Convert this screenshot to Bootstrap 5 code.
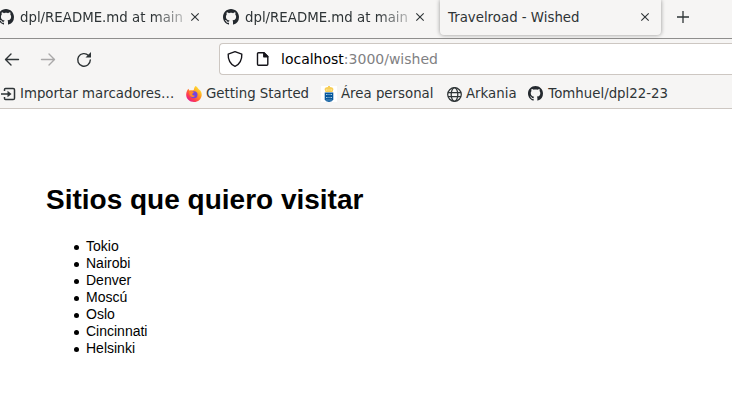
<!DOCTYPE html>
<html lang="es">
<head>
<meta charset="utf-8">
<title>Travelroad - Wished</title>
<link rel="stylesheet" href="https://cdn.jsdelivr.net/npm/bootstrap@5.3.0/dist/css/bootstrap.min.css">
<style>
body { width: 732px; height: 404px; background: #fff; color: #000; }
.chrome { height: 109px; background: #f6f5f4; color: #2e3436; border-bottom: 1px solid #cdc7c2; font: 13.33px/16px "DejaVu Sans", sans-serif; }
.chrome svg { display: block; flex: none; }
.tab-strip { height: 39px; border-bottom: 1px solid #8f8e8d; }
.tab-item { height: 34px; flex: none; }
.tab-a { width: 214px; }
.tab-a svg:first-child { margin-left: -2px; }
.tab-b { width: 226px; padding-left: 9px; }
.tab-current { width: 221px; height: 35px; padding: 0 11px 0 8px; border-radius: 0 0 4px 4px; box-shadow: 0 0 4px rgba(0,0,0,.4); }
.tab-current svg { margin-bottom: 1px; }
.tab-text { width: 163px; margin: 0 7px 0 6px; padding-top: 1px; flex: none; -webkit-mask-image: linear-gradient(90deg,#000 132px,transparent 176px); mask-image: linear-gradient(90deg,#000 132px,transparent 176px); }
.new-tab { margin-left: 16px; }
.tool-row { height: 40px; }
.address { width: 530px; height: 32px; margin-left: 127px; background: #fff; border: 1px solid #cdc7c2; border-right: 0; border-radius: 4px 0 0 4px; font-size: 14px; color: #7f8183; }
.host { color: #000; }
.mark-item { height: 29px; flex: none; }
.mark-import { width: 186px; }
.mark-firefox { width: 135px; }
.mark-area { width: 125px; }
.mark-globe { width: 82px; }
.mark-globe span { margin-left: 3px; }
.page { padding: 74px 46px 0; font: 14px/17px "Liberation Sans", sans-serif; }
.page h1 { font-size: 28px; line-height: 34px; font-weight: 700; margin: 0 0 21px; }
.page ul { padding-left: 26px; margin: 0; list-style: none; }
.page li::before { content: ""; display: inline-block; width: 5px; height: 5px; margin: 0 7px 1px 2px; border-radius: 50%; background: #000; }
</style>
<script src="https://cdn.jsdelivr.net/npm/bootstrap@5.3.0/dist/js/bootstrap.bundle.min.js"></script>
</head>
<body class="overflow-hidden">
<svg width="0" height="0" class="position-absolute">
<symbol id="gh" viewBox="0 0 16 16"><path fill="#24292e" fill-rule="evenodd" d="M8 0C3.58 0 0 3.58 0 8c0 3.54 2.29 6.53 5.47 7.59.4.07.55-.17.55-.38 0-.19-.01-.82-.01-1.49-2.01.37-2.53-.49-2.69-.94-.09-.23-.48-.94-.82-1.13-.28-.15-.68-.52-.01-.53.63-.01 1.08.58 1.23.82.72 1.21 1.87.87 2.33.66.07-.52.28-.87.51-1.07-1.78-.2-3.64-.89-3.64-3.95 0-.87.31-1.59.82-2.15-.08-.2-.36-1.02.08-2.12 0 0 .67-.21 2.2.82.64-.18 1.32-.27 2-.27s1.36.09 2 .27c1.53-1.04 2.2-.82 2.2-.82.44 1.1.16 1.92.08 2.12.51.56.82 1.27.82 2.15 0 3.07-1.87 3.75-3.65 3.95.29.25.54.73.54 1.48 0 1.07-.01 1.93-.01 2.2 0 .21.15.46.55.38A8.01 8.01 0 0 0 16 8c0-4.42-3.58-8-8-8z"/></symbol>
<symbol id="close" viewBox="0 0 10 10"><path d="M1.300 1.300l7.400 7.400M8.700 1.300L1.300 8.700" stroke="#2e3436" stroke-width="1.1" fill="none"/></symbol>
</svg>
<header class="chrome">
  <div class="tab-strip d-flex align-items-start">
    <div class="tab-item tab-a d-flex align-items-center"><svg width="16" height="16"><use href="#gh"/></svg><span class="tab-text text-nowrap overflow-hidden">dpl/README.md at main</span><svg width="10" height="10"><use href="#close"/></svg></div>
    <div class="tab-item tab-b d-flex align-items-center"><svg width="16" height="16"><use href="#gh"/></svg><span class="tab-text text-nowrap overflow-hidden">dpl/README.md at main</span><svg width="10" height="10"><use href="#close"/></svg></div>
    <div class="tab-current d-flex align-items-center justify-content-between"><span>Travelroad - Wished</span><svg width="10" height="10"><use href="#close"/></svg></div>
    <div class="tab-item d-flex align-items-center"><svg width="12" height="12" class="new-tab"><path d="M6 0v12M0 6h12" stroke="#2e3436" stroke-width="1.3"/></svg></div>
  </div>
  <div class="tool-row d-flex align-items-center">
    <svg width="92" height="18" fill="none" stroke="#2e3436" stroke-width="1.4" stroke-linecap="round" stroke-linejoin="round"><path d="M18.500 9.500H6M11 4L5.500 9.500 11 15"/><path stroke="#aaa9a9" d="M41.500 9.500H54M49 4l5.500 5.500L49 15"/><path d="M88.500 5.500A6.300 6.300 0 1 0 90.300 10"/><path fill="#2e3436" stroke="none" d="M91 2v5.500h-5.500z"/></svg>
    <div class="address d-flex align-items-center">
      <svg width="61" height="18" fill="none" stroke="#15141a" stroke-width="1.4" stroke-linejoin="round"><path d="M15 1.700L21.800 4.100C22.200 9.500 19.500 14.800 15 16.400 10.500 14.800 7.800 9.500 8.200 4.100z"/><path d="M38.500 2.700H44L47.800 6.500V14.300Q47.800 15.300 46.800 15.300H38.500Q37.500 15.300 37.500 14.300V3.700Q37.500 2.700 38.500 2.700z"/><path fill="#15141a" d="M43.800 2.700V6.700H47.800z"/></svg>
      <span class="text-nowrap"><span class="host">localhost</span>:3000/wished</span>
    </div>
  </div>
  <div class="d-flex">
    <div class="mark-item mark-import d-flex align-items-center"><svg width="16" height="16" fill="none" stroke="#2e3436" stroke-width="1.5"><path d="M4.500 5V3.500Q4.500 2.500 5.500 2.500H13.200Q14.500 2.500 14.500 3.800V12.200Q14.500 13.500 13.200 13.500H5.500Q4.500 13.500 4.500 12.500V11M1 8H8"/><path stroke="none" fill="#2e3436" d="M7.500 4.800L11.500 8 7.500 11.200z"/></svg><span class="ms-1 text-nowrap">Importar marcadores…</span></div>
    <div class="mark-item mark-firefox d-flex align-items-center"><svg width="16" height="16" viewBox="0 0 16 16"><defs><linearGradient id="flame" x1=".9" y1=".1" x2=".2" y2=".95"><stop stop-color="#ffee36"/><stop offset=".4" stop-color="#ff9a22"/><stop offset=".75" stop-color="#ff404b"/><stop offset="1" stop-color="#e51b91"/></linearGradient></defs><path fill="url(#flame)" d="M9.500 0C11.500 1 12 2.500 13 3.500 15 4.500 16 7 15.700 9.500 15.200 13.300 12 16 8 16 3.500 16 0 12.700.2 8.500.3 6 1.200 4 2.500 2.700L3.200 4.500 5 4.200C7 4 7.500 4.500 8 3.500 8 2.300 8.500 1 9.500 0z"/><circle cx="8" cy="8.700" r="3.500" fill="#7543df"/><path fill="#ff8928" d="M3 5.500Q6 4.500 8 6.500L6 8Q6.500 10 9 9.800 7.500 12 5 10.500 3 9 3 5.500z"/></svg><span class="ms-1 text-nowrap">Getting Started</span></div>
    <div class="mark-item mark-area d-flex align-items-center"><svg width="16" height="16"><path fill="#fff" d="M0 0h16v16H0z"/><path fill="#f8cf56" d="M7 0h2v1q3 0 3.500 2L11.500 6h-7L3.500 3Q4 1 7 1z"/><path stroke="#fff3cc" stroke-width=".8" d="M5 4h1.500m1 0h1m1 0H11"/><path fill="#07589d" d="M3.700 6.500h8.600V13.500Q11.500 15.700 8 16 4.500 15.700 3.700 13.500z"/><path stroke="#a9cce0" stroke-width="1" d="M5 8.500h1.500m1 0h1m1 0H11M5 11.500h1.500m1 0h1m1 0H11M5.500 14h1m1 0h1m1 0h1"/></svg><span class="ms-1 text-nowrap">Área personal</span></div>
    <div class="mark-item mark-globe d-flex align-items-center"><svg width="17" height="16" fill="none" stroke="#2e3436" stroke-width="1.25"><circle cx="8.500" cy="8.500" r="6.800"/><ellipse cx="8.500" cy="8.500" rx="3.300" ry="6.800"/><path d="M2 6.500h13M2 10.500h13"/></svg><span class="text-nowrap">Arkania</span></div>
    <div class="mark-item d-flex align-items-center gap-1"><svg width="15" height="15"><use href="#gh"/></svg><span class="text-nowrap">&#8202;Tomhuel/dpl22-23</span></div>
  </div>
</header>
<main class="page">
  <h1>Sitios que quiero visitar</h1>
  <ul><li>Tokio</li><li>Nairobi</li><li>Denver</li><li>Moscú</li><li>Oslo</li><li>Cincinnati</li><li>Helsinki</li></ul>
</main>
</body>
</html>
